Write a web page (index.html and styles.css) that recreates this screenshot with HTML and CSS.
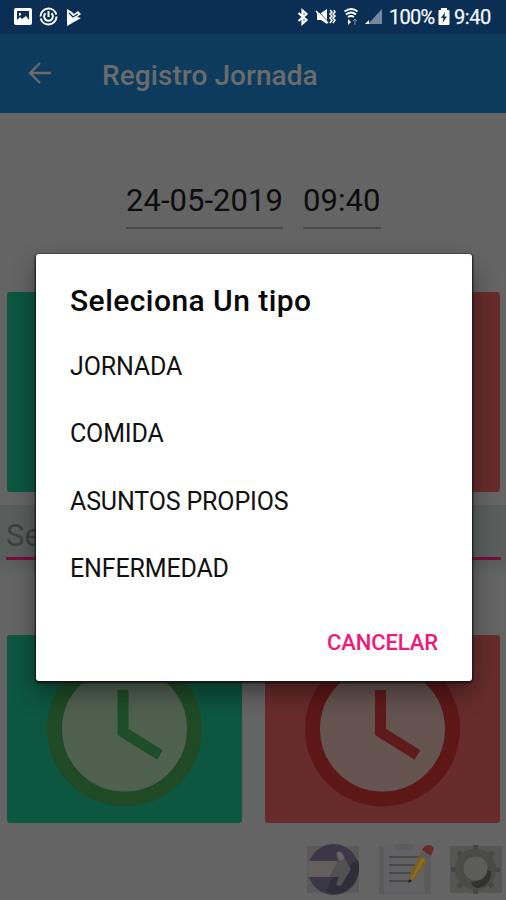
FILE: index.html
```html
<!DOCTYPE html>
<html lang="es">
<head>
<meta charset="utf-8">
<title>Registro Jornada</title>
<link rel="stylesheet" href="styles.css">
</head>
<body>
<div class="screen">
  <header class="status">
    <svg class="status-left" width="72" height="20" viewBox="0 0 72 20">
      <rect x="1" y="1" width="18" height="17" rx="2" fill="#fff"/>
      <path d="M4 4h12v9l-3-4-4 3-2-2-3 3z" fill="#0b2e55"/>
      <path d="M6 6v3l2-1V6z" fill="#fff"/>
      <g fill="none" stroke="#fff"><circle cx="35.500" cy="9.500" r="8" stroke-width="2" stroke-dasharray="23 2"/><path d="M32.500 6.200a4.400 4.400 0 1 0 6 0M35.500 4v6" stroke-width="2"/></g>
      <path d="M54 2l5 3 2 2 4-3 3 3-4 3 4 1-14 8z" fill="#fff"/><path d="M56 6l4 4 5-3" fill="none" stroke="#0b2e55" stroke-width="1.300"/>
    </svg>
    <div class="status-right">
      <svg width="88" height="20" viewBox="0 0 88 20">
        <path d="M1.500 6l8 7-4 3.500v-13l4 3.500-8 7" fill="none" stroke="#fff" stroke-width="2.200"/>
        <path d="M20 6h4l6-4v15l-6-4h-4z" fill="#fff"/><path d="M20 3l12 13" stroke="#0b2e55" stroke-width="1"/><path d="M19 4l12 12" stroke="#fff" stroke-width="1.500"/>
        <path d="M33 3l2 2-2 2 2 2-2 2 2 2-2 3M37 3l1 2-2 2 2 2-2 2 2 2-2 3" fill="none" stroke="#fff" stroke-width="1.500"/>
        <g fill="none" stroke="#fff"><path d="M47.500 4.500q7-5 13 0M49 7.500q5-4 10 0" stroke-width="1.900"/><path d="M51 10q3-2 6 0" stroke-width="2"/></g><path d="M51 12l3 3-3 3z" fill="#fff"/><path d="M58 12v6M56 14l2-2 2 2" stroke="#7e90a6" fill="none"/>
        <path d="M85 2v15H71z" fill="#7388a0"/><path d="M68 17l4-4v4z" fill="#fff"/>
      </svg>
      <span class="battery-text">100%</span>
      <svg class="battery" width="12" height="18" viewBox="0 0 12 18"><path d="M3 2V0h6v2h1.500q1 0 1 1v13q0 1-1 1h-9q-1 0-1-1V3q0-1 1-1z" fill="#fff"/><path d="M7 4L3 10h2.500L4.500 15 9 8.500H6.500z" fill="#0b2e55"/></svg>
      <span class="clock">9:40</span>
    </div>
  </header>
  <div class="appbar">
    <svg width="24" height="22" viewBox="0 0 24 22"><path d="M23 11H2M12 1L2 11l10 10" fill="none" stroke="#696b6d" stroke-width="2.300"/></svg>
    <h1>Registro Jornada</h1>
  </div>
  <main>
    <div class="fields"><span class="field date">24-05-2019</span><span class="field time">09:40</span></div>
    <div class="tiles top"><div class="tile green"></div><div class="tile red"></div></div>
    <div class="select"><span>Seleccione tipo</span></div>
    <div class="tiles bottom">
      <div class="tile green">
        <svg width="235" height="188" viewBox="0 0 235 188"><circle cx="117.500" cy="94" r="70" fill="#50604f" stroke="#1f4a25" stroke-width="15"/><path d="M116 55v42l37 23" fill="none" stroke="#1d4d29" stroke-width="11"/></svg>
      </div>
      <div class="tile red">
        <svg width="235" height="188" viewBox="0 0 235 188"><circle cx="117.500" cy="94" r="70" fill="#64534f" stroke="#5d1717" stroke-width="15"/><path d="M115.500 55v42l37 23" fill="none" stroke="#5f1b1b" stroke-width="11"/></svg>
      </div>
    </div>
    <nav class="tools">
      <svg width="54" height="58" viewBox="0 0 54 58">
        <path d="M1 6h52v47H1z" fill="#595959"/><circle cx="27.500" cy="29.500" r="25.500" fill="#3b3746"/>
        <path d="M28 34L20 51q12 7 24-4 12-12 8-27z" fill="#302d3a"/>
        <path d="M3 21h28v16H3q-3-8 0-16z" fill="#625f5e"/><path d="M30 14q2-4 6 0l9 15-9 15q-3 4-6 0l3-7H23l9-16z" fill="#515154"/><path d="M31 13q2-3 5 0l3 5-5 3z" fill="#656565"/>
      </svg>
      <svg width="56" height="58" viewBox="0 0 56 58">
        <path d="M3 6h52v48H3z" fill="#5b5b5b"/><path d="M8 4h40v48H8z" fill="#626264"/><path d="M19 4h18v6H19z" fill="#5c5c5c"/>
        <path d="M13 17h30M13 25h27M13 33h25M13 41h23" stroke="#414143" stroke-width="1.700"/>
        <path d="M44 14l9 5-14 20-6 3 1-8z" fill="#756021"/><path d="M47 16l3 2-13 21-3 1z" fill="#86702b"/><path d="M46 10l3-4q6-3 9 2l-3 8z" fill="#672d25"/><path d="M45 11l10 5-2 5-9-5z" fill="#58595a"/><path d="M32 43l1-4 3 2z" fill="#222"/>
      </svg>
      <svg width="58" height="58" viewBox="0 0 58 58">
        <path d="M2 6h52v47H2z" fill="#555653"/>
        <path d="M27.500 5v49M3 29.500h49M10 12l35 35M10 47l35-35" fill="none" stroke="#464743" stroke-width="5"/>
        <circle cx="27.500" cy="29" r="16" fill="none" stroke="#4a4b47" stroke-width="9"/>
        <path d="M43 31q1 13-12 17-7 0-8-6 15-1 16-12z" fill="#323331"/><circle cx="27.500" cy="28.500" r="12" fill="#5c5d59"/>
      </svg>
    </nav>
  </main>
  <section class="dialog" role="dialog">
    <h2>Seleciona Un tipo</h2>
    <ul><li>JORNADA</li><li>COMIDA</li><li>ASUNTOS PROPIOS</li><li>ENFERMEDAD</li></ul>
    <button>CANCELAR</button>
  </section>
</div>
</body>
</html>
```

FILE: styles.css
```css
* { box-sizing: border-box; }
body { margin: 0; font-family: Roboto, sans-serif; background: #646464; }
svg { display: block; flex: none; overflow: visible; }
.screen { position: relative; width: 506px; height: 900px; overflow: hidden; background: #646464; }
.status { height: 34px; background: #0b2e55; display: flex; justify-content: space-between; padding: 7px 15px 0 13px; color: #f4f7fb; }
.status-right { display: flex; gap: 4px; font-size: 20px; line-height: 21px; -webkit-text-stroke: .25px #f4f7fb; }
.battery-text { width: 45px; letter-spacing: -.7px; }
.battery { margin-top: 1px; }
.clock { width: 37px; letter-spacing: -.4px; }
.appbar { height: 79px; background: #0c3b5e; display: flex; align-items: center; padding-left: 28px; gap: 50px; }
h1 { margin: 4px 0 0; font-size: 28px; font-weight: 500; color: #6b6b6b; letter-spacing: .07px; }
.appbar svg { margin-bottom: 1px; }
.fields { display: flex; padding: 65px 0 0 126px; gap: 20px; height: 179px; }
.field { height: 51px; border-bottom: 2px solid #484848; font-size: 31px; line-height: 46px; color: #0d0d0d; white-space: nowrap; letter-spacing: .05px; }
.date { width: 157px; }
.time { width: 78px; }
.tiles { display: flex; gap: 23px; padding-left: 7px; }
.tile { width: 235px; border-radius: 3px; overflow: hidden; }
.top .tile { height: 200px; }
.bottom .tile { height: 188px; }
.green { background: #0d5640; }
.red { background: #672b2b; }
.select { height: 67px; margin: 13px 0 63px; padding: 0 5px 0 6px; background: linear-gradient(#595d5c 0 53px, #606161 67px); }
.select span { display: block; height: 55px; border-bottom: 3px solid #760f3c; color: #3e4040; font-size: 31px; line-height: 61px; }
.tools { display: flex; padding: 17px 0 0 306px; gap: 16px; }
.dialog { position: absolute; left: 36px; top: 254px; width: 436px; height: 427px; background: #fff; border-radius: 3px; padding: 27px 34px; box-shadow: 0 1px 2px 1px #151515, 0 12px 24px rgba(0,0,0,.4); display: flex; flex-direction: column; }
h2 { margin: 0; font-size: 30px; line-height: 40px; font-weight: 500; color: #080808; letter-spacing: .45px; white-space: nowrap; }
ul { list-style: none; margin: 12px 0 0; padding: 0; }
li { height: 67.400px; line-height: 68px; font-size: 25px; color: #111; letter-spacing: -.15px; }
button { align-self: flex-end; margin-top: 23px; border: 0; padding: 0; background: none; font: 500 22px/34px Roboto, sans-serif; letter-spacing: -.1px; color: #f01878; }
```
